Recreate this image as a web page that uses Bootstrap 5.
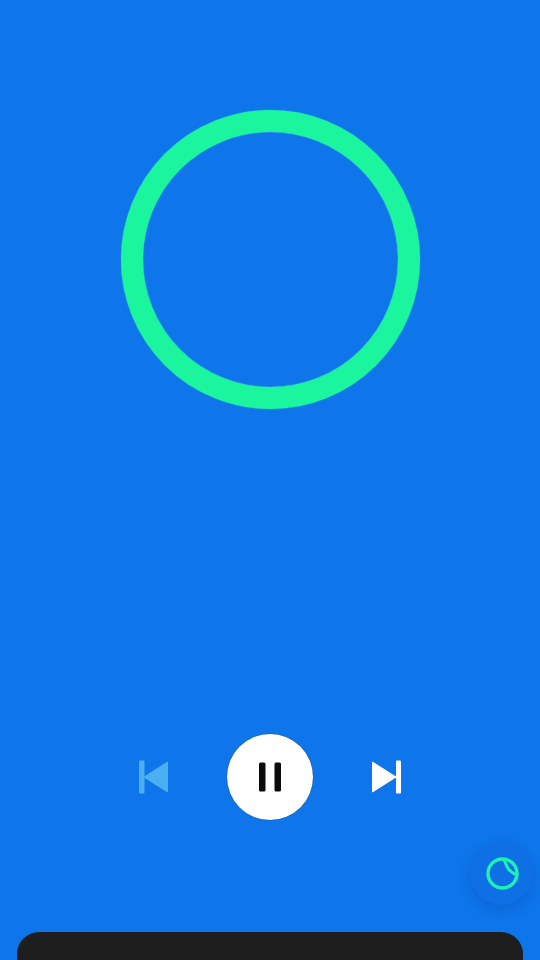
<!DOCTYPE html>
<html lang="en">
<head>
<meta charset="utf-8">
<title>Player</title>
<link href="https://cdn.jsdelivr.net/npm/bootstrap@5.3.0/dist/css/bootstrap.min.css" rel="stylesheet">
<style>
html,body{margin:0;height:100%;overflow:hidden;background:#0e75ea}
.stage{width:540px;height:960px;background:#0e75ea;overflow:hidden}
.ring-big{width:299px;height:299px;margin-top:109.5px;border:22px solid #1bf59e;border-radius:50%;box-shadow:0 0 1px #45f5d0,inset 0 0 1px #6ff5e0}
.controls{margin-top:325.5px;height:86px}
.ctl-btn{padding:0;border:0;background:none;line-height:0}
.ctl-prev{width:30px;height:34px}
.ctl-next{width:30px;height:34px}
.ctl-gap{gap:59px}
.pause-btn{width:86px;height:86px;background:#fff;border-radius:50%;box-shadow:0 0 1px #333}
.fab{right:7px;bottom:55px;width:63px;height:63px;background:#0f6fe4;box-shadow:0 5px 12px rgba(8,70,170,.3)}
.fab:hover,.fab:active{background:#0f6fe4}
.sheet{height:28px;margin:0 17px;background:#1e1e1e;border-radius:22px 22px 0 0}
</style>
</head>
<body>
<div class="stage position-relative d-flex flex-column">
  <div class="ring-big mx-auto flex-shrink-0"></div>
  <div class="controls d-flex justify-content-center align-items-center ctl-gap">
    <button class="ctl-btn ctl-prev" type="button" aria-label="Previous">
      <svg width="30" height="34" viewBox="0 0 30 34"><rect x="1" y="0.500" width="5.500" height="33" rx="1" fill="#4bb0f2"/><path d="M6 17 29.500 2V32Z" fill="#4bb0f2" stroke="#4bb0f2" stroke-width="1" stroke-linejoin="round"/></svg>
    </button>
    <button class="ctl-btn pause-btn d-flex justify-content-center align-items-center" type="button" aria-label="Pause">
      <svg width="24" height="30" viewBox="0 0 24 30"><rect x="1" y="0.500" width="6.500" height="29" rx="1.500" fill="#0b0b0b"/><rect x="16.500" y="0.500" width="6.500" height="29" rx="1.500" fill="#0b0b0b"/></svg>
    </button>
    <button class="ctl-btn ctl-next" type="button" aria-label="Next">
      <svg width="30" height="34" viewBox="0 0 30 34"><path d="M0.500 2 24 17 0.500 32Z" fill="#fff" stroke="#fff" stroke-width="1" stroke-linejoin="round"/><rect x="24" y="0.500" width="5" height="33" rx="1" fill="#fff"/></svg>
    </button>
  </div>
  <button class="fab position-absolute btn rounded-circle p-0 d-flex justify-content-center align-items-center" type="button" aria-label="Theme">
    <svg width="36" height="36" viewBox="0 0 36 36" fill="none" stroke="#1cf2b2"><circle cx="18.500" cy="17.500" r="14.500" stroke-width="3.400"/><path d="M20 3.500c1.800 4.500 2.800 7.500 4.800 10 2 2.400 4.400 4 8 5.500" stroke-width="3"/></svg>
  </button>
  <div class="sheet mt-auto flex-shrink-0"></div>
</div>
<script src="https://cdn.jsdelivr.net/npm/bootstrap@5.3.0/dist/js/bootstrap.bundle.min.js"></script>
</body>
</html>
